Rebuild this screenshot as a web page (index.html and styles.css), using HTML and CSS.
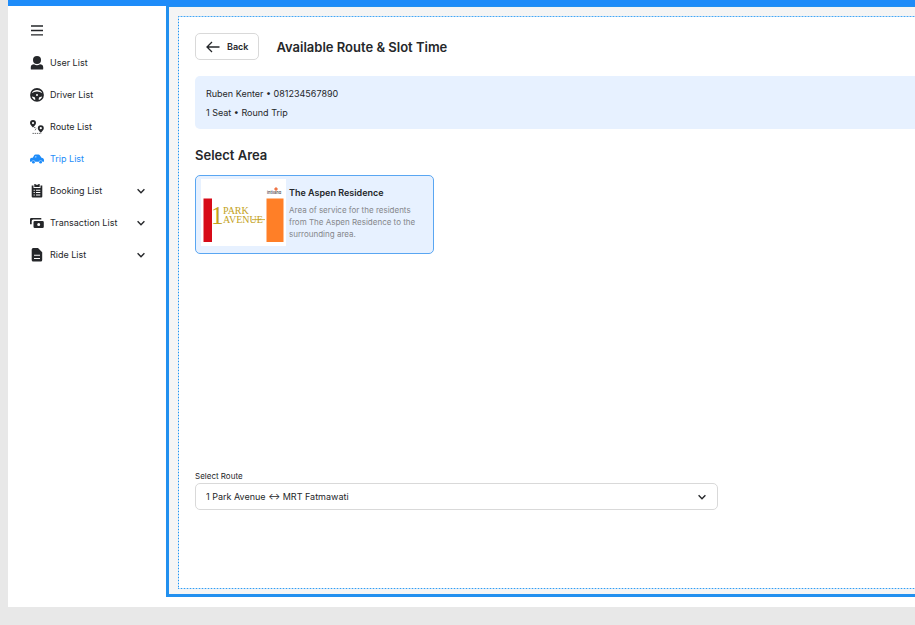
FILE: index.html
```html
<!DOCTYPE html>
<html lang="en">
<head>
<meta charset="utf-8">
<meta name="viewport" content="width=device-width, initial-scale=1">
<title>Available Route &amp; Slot Time</title>
<link rel="stylesheet" href="styles.css">
</head>
<body>
<div class="app">
  <header class="topbar"></header>
  <div class="layout">
    <nav class="sidebar" aria-label="Main">
      <button class="menu-toggle" type="button" aria-label="Toggle menu">
        <svg class="icon" viewBox="0 0 14 14"><path d="M1 2h12M1 6.500h12M1 10.800h12" fill="none" stroke="currentColor" stroke-width="1.300"/></svg>
      </button>
      <a class="nav-item" href="#">
        <svg class="icon" viewBox="0 0 14 14"><ellipse cx="7" cy="4" rx="4" ry="4"/><path d="M.8 13v-2C.8 9.300 2.300 8.500 4 8.300Q7 10.200 10 8.300c1.700.2 3.200 1 3.200 2.700v2q0 .6-.6.6H1.400q-.6 0-.6-.6z"/></svg>
        <span>User List</span>
      </a>
      <a class="nav-item" href="#">
        <svg class="icon" viewBox="0 0 14 14"><path fill-rule="evenodd" d="M7 0a6.900 6.900 0 1 0 0 13.800A6.900 6.900 0 0 0 7 0zM1.800 5.200C3.400 .8 10.600 .8 12.200 5.200L9.900 4.100Q7 3.100 4.100 4.100zM1.900 8.500l2.100.6c1 .3 1.400 1.300 1.200 2.800C3.500 11.400 2.300 10.100 1.900 8.500zM12.100 8.500l-2.100.6c-1 .3-1.400 1.300-1.200 2.800 1.700-.5 2.900-1.800 3.300-3.400zM7 6.100a1 1 0 1 0 0 2 1 1 0 0 0 0-2z"/></svg>
        <span>Driver List</span>
      </a>
      <a class="nav-item" href="#">
        <svg class="icon" viewBox="0 0 14 14"><path fill-rule="evenodd" d="M3 0a3 3 0 0 0-3 3c0 1.700 1.700 3 3 4.500C4.300 6 6 4.700 6 3a3 3 0 0 0-3-3zm0 1.900a1.100 1.100 0 1 1 0 2.200 1.100 1.100 0 0 1 0-2.200zM10.800 5.200A3 3 0 0 0 7.800 8.200c0 1.800 1.700 3 3 4.500 1.300-1.500 3-2.700 3-4.500a3 3 0 0 0-3-3zm0 1.900a1.100 1.100 0 1 1 0 2.200 1.100 1.100 0 0 1 0-2.200z"/><path d="M4 7.600l2-.1M6 8.600l-1.200 2.200M2.500 13.400h9" fill="none" stroke="currentColor" stroke-width=".7" stroke-dasharray="1.400 .8"/></svg>
        <span>Route List</span>
      </a>
      <a class="nav-item nav-item--active" href="#" aria-current="page">
        <svg class="icon" viewBox="0 0 14 14"><path d="M2.800 5.800L4.200 3.200Q4.600 2.500 5.500 2.500h3q.8 0 1.300.7L11.500 5.800c1.700.2 2.500 1 2.500 2.200v1.200q0 .6-.6.6h-.9a2 2 0 0 0-3.800 0H5.300a2 2 0 0 0-3.800 0H.6Q0 9.800 0 9.200V7.600Q0 5.800 1.800 5.800z"/><path d="M4.700 5.400l.8-1.500h.9v1.500z" fill="#fff" opacity=".6"/><circle cx="3.400" cy="10.200" r="1.400"/><circle cx="10.600" cy="10.200" r="1.400"/></svg>
        <span>Trip List</span>
      </a>
      <button class="nav-item" type="button" aria-expanded="false">
        <svg class="icon" viewBox="0 0 14 14"><path fill-rule="evenodd" d="M4.300 0h1.400v.7h2.600V0h1.400v3H4.300zM1.700 1.500h1.800v2.500h7V1.500h1.800v11q0 1-1 1h-8.600q-1 0-1-1zM3.600 5.700v1.100h1.200V5.700zM6 5.700v1.100h4.300V5.700zM3.600 8v1.100h1.200V8zM6 8v1.100h4.300V8zM3.600 10.400v1.100h1.200v-1.100zM6 10.400v1.100h4.300v-1.100z"/></svg>
        <span>Booking List</span>
        <svg class="chevron" viewBox="0 0 8 8"><path d="M.6 2.300L4 5.700l3.400-3.400"/></svg>
      </button>
      <button class="nav-item" type="button" aria-expanded="false">
        <svg class="icon" viewBox="0 0 14 14"><path fill-rule="evenodd" d="M0 8.200V3.200Q0 2 1.200 2H11.300v1.500H3.200q-1.500 0-1.500 1.500v3.200zM4.800 5h7.700q1.300 0 1.300 1.300v4.500q0 1.300-1.300 1.300H4.800q-1.300 0-1.300-1.300V6.300Q3.500 5 4.800 5zM8.700 7.100a1.500 1.500 0 1 0 0 3 1.500 1.500 0 0 0 0-3z"/></svg>
        <span>Transaction List</span>
        <svg class="chevron" viewBox="0 0 8 8"><path d="M.6 2.300L4 5.700l3.400-3.400"/></svg>
      </button>
      <button class="nav-item" type="button" aria-expanded="false">
        <svg class="icon" viewBox="0 0 14 14"><path fill-rule="evenodd" d="M3.200 0H8l4.200 4.300v7.700q0 1.500-1.500 1.500H3.200q-1.500 0-1.500-1.500V1.500Q1.700 0 3.200 0zM4 6.700v1.100h6V6.700zM4 10v1.100h6V10z"/></svg>
        <span>Ride List</span>
        <svg class="chevron" viewBox="0 0 8 8"><path d="M.6 2.300L4 5.700l3.400-3.400"/></svg>
      </button>
    </nav>

    <main class="main">
      <div class="panel">
        <div class="heading">
          <button class="back" type="button">
            <svg class="icon" viewBox="0 0 14 14"><path d="M13.500 7H1M6 2L1 7l5 5" fill="none" stroke="currentColor" stroke-width="1.300"/></svg>
            Back
          </button>
          <h1 class="title">Available Route &amp; Slot Time</h1>
        </div>

        <section class="summary">
          <p>Ruben Kenter • 081234567890</p>
          <p>1 Seat • Round Trip</p>
        </section>

        <h2 class="section-title">Select Area</h2>
        <div class="areas">
          <button class="area" type="button" aria-pressed="true">
            <svg class="area-logo" viewBox="0 0 85 67" role="img" aria-label="1 Park Avenue">
              <rect width="85" height="67" fill="#fff"/>
              <rect x="2.500" y="19.500" width="8.500" height="43.500" fill="#d70b18"/>
              <rect x="65.500" y="19.500" width="17" height="43.500" fill="#ff7f27"/>
              <text class="logo-number" x="10" y="44.500">1</text>
              <text class="logo-word" x="22" y="34.500">PARK</text>
              <text class="logo-word" x="22" y="44">AVENUE</text>
              <path d="M51 40.600h13" stroke="#c3a21c" stroke-width=".8"/>
              <text class="logo-brand" x="66" y="15">intiland</text>
              <circle cx="75" cy="10" r="1.500" fill="#ee5a24"/>
              <path d="M73 10h4M75 8v4" stroke="#ef8a62" stroke-width=".7"/>
            </svg>
            <span class="area-text">
              <strong class="area-name">The Aspen Residence</strong>
              <span class="area-description">Area of service for the residents from The Aspen Residence to the surrounding area.</span>
            </span>
          </button>
        </div>

        <div class="field">
          <label class="field-label" for="route">Select Route</label>
          <div class="select-box">
            <select class="select" id="route">
              <option>1 Park Avenue ↔ MRT Fatmawati</option>
            </select>
            <svg class="chevron" viewBox="0 0 8 8"><path d="M.6 2.300L4 5.700l3.400-3.400"/></svg>
          </div>
        </div>
      </div>
    </main>
  </div>
</div>
</body>
</html>
```
FILE: styles.css
```css
* {
  box-sizing: border-box;
}

body {
  margin: 0;
  background: #e8e8e8;
  color: #25272a;
  font: 9px/16px Inter, "Liberation Sans", sans-serif;
}

h1, h2, p {
  margin: 0;
}

button, select {
  color: inherit;
  font: inherit;
}

.app {
  margin: 0 0 18px 8px;
  background: #fff;
}

.topbar {
  height: 6px;
  background: #1e8cf9;
}

.layout {
  display: flex;
  align-items: stretch;
  padding-bottom: 10px;
}

.sidebar {
  flex: 0 0 158px;
  padding: 9px 21px 0 22px;
}

.menu-toggle,
.nav-item {
  display: flex;
  align-items: center;
  gap: 6px;
  width: 100%;
  height: 32px;
  padding: 0;
  border: 0;
  background: none;
  color: inherit;
  text-decoration: none;
  white-space: nowrap;
}

.nav-item--active {
  color: #1e8cf9;
}

.icon {
  flex: none;
  width: 14px;
  height: 14px;
  fill: currentColor;
}

.chevron {
  flex: none;
  width: 8px;
  height: 8px;
  margin-left: auto;
  fill: none;
  stroke: currentColor;
  stroke-width: 1.4;
}

.main {
  flex: 1;
  min-width: 0;
  padding: 9px 0 5px 9px;
  border: solid #2290ef;
  border-width: 1px 0 3px 3px;
  background: #f5f5f5;
}

.panel {
  padding: 17px 0 79px 17px;
  background:
    repeating-linear-gradient(90deg, #45a8f5 0 1px, #a5d3f9 1px 3px) top / 100% 1px no-repeat,
    repeating-linear-gradient(90deg, #2f9df5 0 1px, #b9ddfa 1px 3px) bottom / 100% 1px no-repeat,
    repeating-linear-gradient(#1e95f5 0 1px, #b9ddfa 1px 3px) left / 1px 100% no-repeat,
    #fff;
}

.heading {
  display: flex;
  align-items: center;
  gap: 17px;
}

.back {
  display: flex;
  align-items: center;
  gap: 7px;
  height: 27px;
  padding: 0 10px;
  border: 1px solid #d9d9d9;
  border-radius: 5px;
  background: #fff;
  font-weight: 600;
}

.title {
  font-size: 13px;
  font-weight: 600;
  line-height: 20px;
}

.summary {
  margin-top: 16px;
  padding: 8px 11px 7px;
  border-radius: 5px 0 0 5px;
  background: #e7f1ff;
  line-height: 19px;
}

.section-title {
  margin-top: 16px;
  font-size: 13px;
  font-weight: 600;
  line-height: 20px;
}

.areas {
  display: flex;
  align-items: flex-start;
  min-height: 305px;
  padding-top: 10px;
}

.area {
  display: flex;
  gap: 3px;
  width: 239px;
  height: 79px;
  padding: 3px 5px;
  border: 1px solid #59a6f2;
  border-radius: 5px;
  background: #e7f1ff;
  text-align: left;
}

.area-logo {
  flex: none;
  width: 85px;
  height: 67px;
}

.area-text {
  display: flex;
  flex-direction: column;
  gap: 3px;
  padding: 6px 8px 0 0;
}

.area-name {
  font-weight: 600;
}

.area-description {
  color: #85878b;
  font-size: 8px;
  line-height: 12px;
}

.logo-number,
.logo-word {
  fill: #c3a21c;
  font-family: "Liberation Serif", serif;
}

.logo-number {
  font-size: 25px;
}

.logo-word {
  font-size: 10px;
}

.logo-brand {
  fill: #555;
  font-size: 4px;
  font-weight: 600;
}

.field {
  width: 523px;
  max-width: 100%;
}

.field-label {
  display: block;
  font-size: 8px;
  line-height: 12px;
}

.select-box {
  position: relative;
}

.select {
  display: block;
  width: 100%;
  height: 27px;
  margin-top: 1px;
  padding: 0 28px 0 10px;
  border: 1px solid #d9d9d9;
  border-radius: 5px;
  appearance: none;
  background: #fff;
}

.select-box .chevron {
  position: absolute;
  top: 10px;
  right: 12px;
  pointer-events: none;
}
```
